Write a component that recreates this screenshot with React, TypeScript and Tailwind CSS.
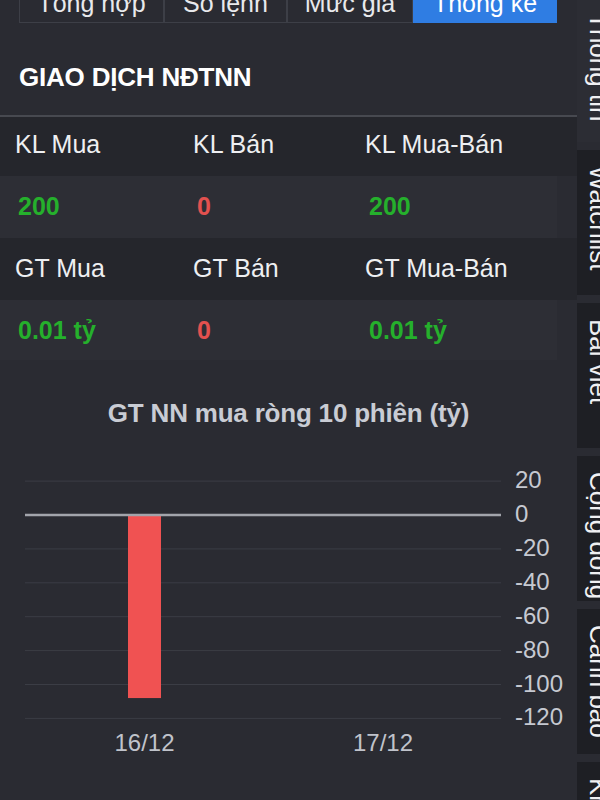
import React from "react";

const tabs = [
  { label: "Tổng hợp", w: "w-[145px]", active: false },
  { label: "Sổ lệnh", w: "w-[123px]", active: false },
  { label: "Mức giá", w: "w-[126px]", active: false },
  { label: "Thống kê", w: "w-[144px]", active: true },
];

const sideTabs = [
  { label: "Thông tin", active: true },
  { label: "Watchlist", active: false },
  { label: "Bài viết", active: false },
  { label: "Cộng đồng", active: false },
  { label: "Cảnh báo", active: false },
  { label: "Khuyến nghị", active: false },
];

const GREEN = "text-[#25b02c]";
const RED = "text-[#e2514f]";

// y = 515 is zero, 20 units = 33.9px
const ticks = [20, 0, -20, -40, -60, -80, -100, -120];
const yOf = (v: number) => 515 - (v / 20) * 33.9;

const bars = [
  { label: "16/12", value: -108, cx: 144.5 },
  { label: "17/12", value: 0, cx: 383 },
];

function Chart() {
  return (
    <svg width="577" height="330" viewBox="0 440 577 330" className="block">
      {ticks.map((t) =>
        t === 0 ? null : (
          <line key={t} x1="25" x2="501" y1={yOf(t)} y2={yOf(t)} stroke="#3b3d45" strokeWidth="1" />
        )
      )}
      {bars.map((b) =>
        b.value !== 0 ? (
          <rect key={b.label} x={b.cx - 16.5} y={515} width="33" height={yOf(b.value) - 515} fill="#f05252" />
        ) : null
      )}
      <line x1="25" x2="501" y1="515" y2="515" stroke="#a2a4ab" strokeWidth="2.5" />
      {ticks.map((t) => (
        <text
          key={t}
          x="515"
          y={yOf(t) + 7}
          fill="#c6c9d1"
          fontSize="24"
          fontFamily="'Liberation Sans', Arial, sans-serif"
        >
          {t}
        </text>
      ))}
      {bars.map((b) => (
        <text
          key={b.label}
          x={b.cx}
          y="751"
          textAnchor="middle"
          fill="#c0c3cb"
          fontSize="24"
          fontFamily="'Liberation Sans', Arial, sans-serif"
        >
          {b.label}
        </text>
      ))}
    </svg>
  );
}

export default function App() {
  return (
    <div className="w-[600px] h-[800px] overflow-hidden flex bg-[#2a2b32] font-['Liberation_Sans',Arial,sans-serif]">
      {/* Main panel */}
      <div className="w-[577px] shrink-0 flex flex-col">
        {/* Tabs */}
        <div className="flex ml-[19px] mt-[-17px] h-[40px]">
          {tabs.map((t) => (
            <div
              key={t.label}
              className={`${t.w} flex items-center justify-center text-[25px] leading-none border ${
                t.active ? "bg-[#2f7de3] border-[#2f7de3] text-white" : "border-[#3d3f47] text-[#e8e9ec]"
              }`}
            >
              {t.label}
            </div>
          ))}
        </div>

        {/* Title */}
        <div className="mt-[41px] pl-[19px] text-[26px] leading-none font-bold text-white tracking-[-0.2px]">
          GIAO DỊCH NĐTNN
        </div>
        <div className="mt-[25px] h-[2px] bg-[#474950]" />

        {/* Stats */}
        <div className="h-[59px] bg-[#25262c] grid grid-cols-[178px_172px_1fr] pl-[15px] pt-[15px] text-[25px] leading-none text-[#eeeff2]">
          <span>KL Mua</span>
          <span>KL Bán</span>
          <span>KL Mua-Bán</span>
        </div>
        <div className="h-[62px] mr-[20px] bg-[#2d2e35] grid grid-cols-[179px_172px_1fr] pl-[18px] pt-[18px] text-[25px] leading-none font-bold">
          <span className={GREEN}>200</span>
          <span className={RED}>0</span>
          <span className={GREEN}>200</span>
        </div>
        <div className="h-[62px] bg-[#25262c] grid grid-cols-[178px_172px_1fr] pl-[15px] pt-[18px] text-[25px] leading-none text-[#eeeff2]">
          <span>GT Mua</span>
          <span>GT Bán</span>
          <span>GT Mua-Bán</span>
        </div>
        <div className="h-[60px] mr-[20px] bg-[#2d2e35] grid grid-cols-[179px_172px_1fr] pl-[18px] pt-[18px] text-[25px] leading-none font-bold">
          <span className={GREEN}>0.01 tỷ</span>
          <span className={RED}>0</span>
          <span className={GREEN}>0.01 tỷ</span>
        </div>

        {/* Chart */}
        <div className="mt-[40px] text-center text-[26px] leading-none font-bold text-[#c9ccd4] tracking-[-0.2px]">
          GT NN mua ròng 10 phiên (tỷ)
        </div>
        <div className="mt-[14px]">
          <Chart />
        </div>
      </div>

      {/* Side tabs */}
      <div className="w-[60px] shrink-0 flex flex-col gap-[8px] mt-[-3px]">
        {sideTabs.map((t) => (
          <div
            key={t.label}
            className={`h-[145px] shrink-0 pl-[9px] pt-[16px] ${t.active ? "bg-[#2c2d34]" : "bg-[#1e1f24]"}`}
          >
            <span className="[writing-mode:vertical-rl] text-[26px] leading-none text-[#f0f0f2] whitespace-nowrap">
              {t.label}
            </span>
          </div>
        ))}
      </div>
    </div>
  );
}
